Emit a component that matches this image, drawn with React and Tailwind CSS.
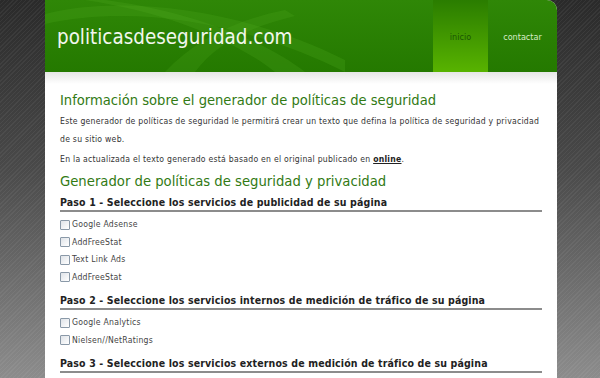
import React from 'react';

const steps = [
  {
    title: 'Paso 1 - Seleccione los servicios de publicidad de su página',
    items: ['Google Adsense', 'AddFreeStat', 'Text Link Ads', 'AddFreeStat'],
  },
  {
    title: 'Paso 2 - Seleccione los servicios internos de medición de tráfico de su página',
    items: ['Google Analytics', 'Nielsen//NetRatings'],
  },
  {
    title: 'Paso 3 - Seleccione los servicios externos de medición de tráfico de su página',
    items: ['Statcounter'],
  },
];

const font = { fontFamily: '"DejaVu Sans Condensed", "DejaVu Sans", sans-serif' };

const Box = () => (
  <span className="w-[10px] h-[10px] border border-[#8a99a8] bg-gradient-to-br from-[#dfe3e8] to-white rounded-[1px] shrink-0" />
);

const App = () => {
  return (
    <div
      className="h-[378px] overflow-hidden bg-[repeating-linear-gradient(135deg,rgba(255,255,255,0.05)_0px,rgba(255,255,255,0.05)_1px,transparent_1px,transparent_3px),linear-gradient(to_bottom,#2a2a2a,#4a4a4a_45%,#8c8c8c)]"
      style={font}
    >
      <div className="w-[512px] ml-[45px] h-full bg-white rounded-tr-[10px] overflow-hidden">
        {/* Header */}
        <div className="relative h-[72px] bg-gradient-to-b from-[#2f8707] to-[#247900] flex">
          <svg className="absolute inset-0" width="512" height="72" viewBox="0 0 512 72">
            <path d="M0 14 C 80 -6, 200 10, 300 60 L 300 72 C 200 22, 90 4, 0 24 Z" fill="#4aa21a" opacity="0.3" />
            <path d="M60 0 C 140 10, 220 40, 260 72 L 230 72 C 190 40, 120 12, 40 0 Z" fill="#5fb52a" opacity="0.18" />
            <path d="M120 72 C 150 40, 190 20, 240 10 L 250 16 C 200 28, 170 46, 150 72 Z" fill="#56ad22" opacity="0.2" />
          </svg>
          <div className="relative flex-1 pl-[12px] pt-[24px] text-[20.4px] leading-[26px] text-[#f2f7ee]">
            politicasdeseguridad.com
          </div>
          <div className="relative flex h-full text-[9px] pt-[3px]">
            <div className="w-[55px] -mt-[3px] h-[72px] bg-gradient-to-b from-[#2a7d00] to-[#58b300] flex items-center justify-center pt-[3px] text-[#1a5504]">
              inicio
            </div>
            <div className="w-[69px] h-full flex items-center justify-center text-[#d7ecc6]">
              contactar
            </div>
          </div>
        </div>

        {/* Content */}
        <div className="bg-gradient-to-b from-[#e6e6e6] to-white to-[12px] bg-no-repeat px-[15px] pt-[18px]">
          <h1 className="text-[14.6px] leading-[20px] text-[#327a14]">
            Información sobre el generador de políticas de seguridad
          </h1>
          <p className="mt-[2px] text-[8.6px] tracking-[0.25px] leading-[18px] text-[#333]">
            Este generador de políticas de seguridad le permitirá crear un texto que defina la política de seguridad y privacidad de su sitio web.
          </p>
          <p className="mt-[2px] text-[8.6px] tracking-[0.25px] leading-[18px] text-[#333]">
            En la actualizada el texto generado está basado en el original publicado en{' '}
            <a className="font-bold underline text-[#222]">online</a>.
          </p>
          <h2 className="mt-[3px] text-[14.7px] leading-[20px] text-[#327a14]">
            Generador de políticas de seguridad y privacidad
          </h2>
          {steps.map((step) => (
            <div key={step.title}>
              <div className="mt-[3px] border-b-2 border-[#8c8c8c] text-[10.5px] tracking-[0.15px] leading-[16px] font-bold text-[#222]">
                {step.title}
              </div>
              <div className="pt-[4px] pb-[3px]">
                {step.items.map((item, i) => (
                  <div key={i} className="flex items-center gap-[2px] h-[17.5px] text-[8.6px] tracking-[0.25px] text-[#444]">
                    <Box />
                    <span>{item}</span>
                  </div>
                ))}
              </div>
            </div>
          ))}
        </div>
      </div>
    </div>
  );
};

export default App;
